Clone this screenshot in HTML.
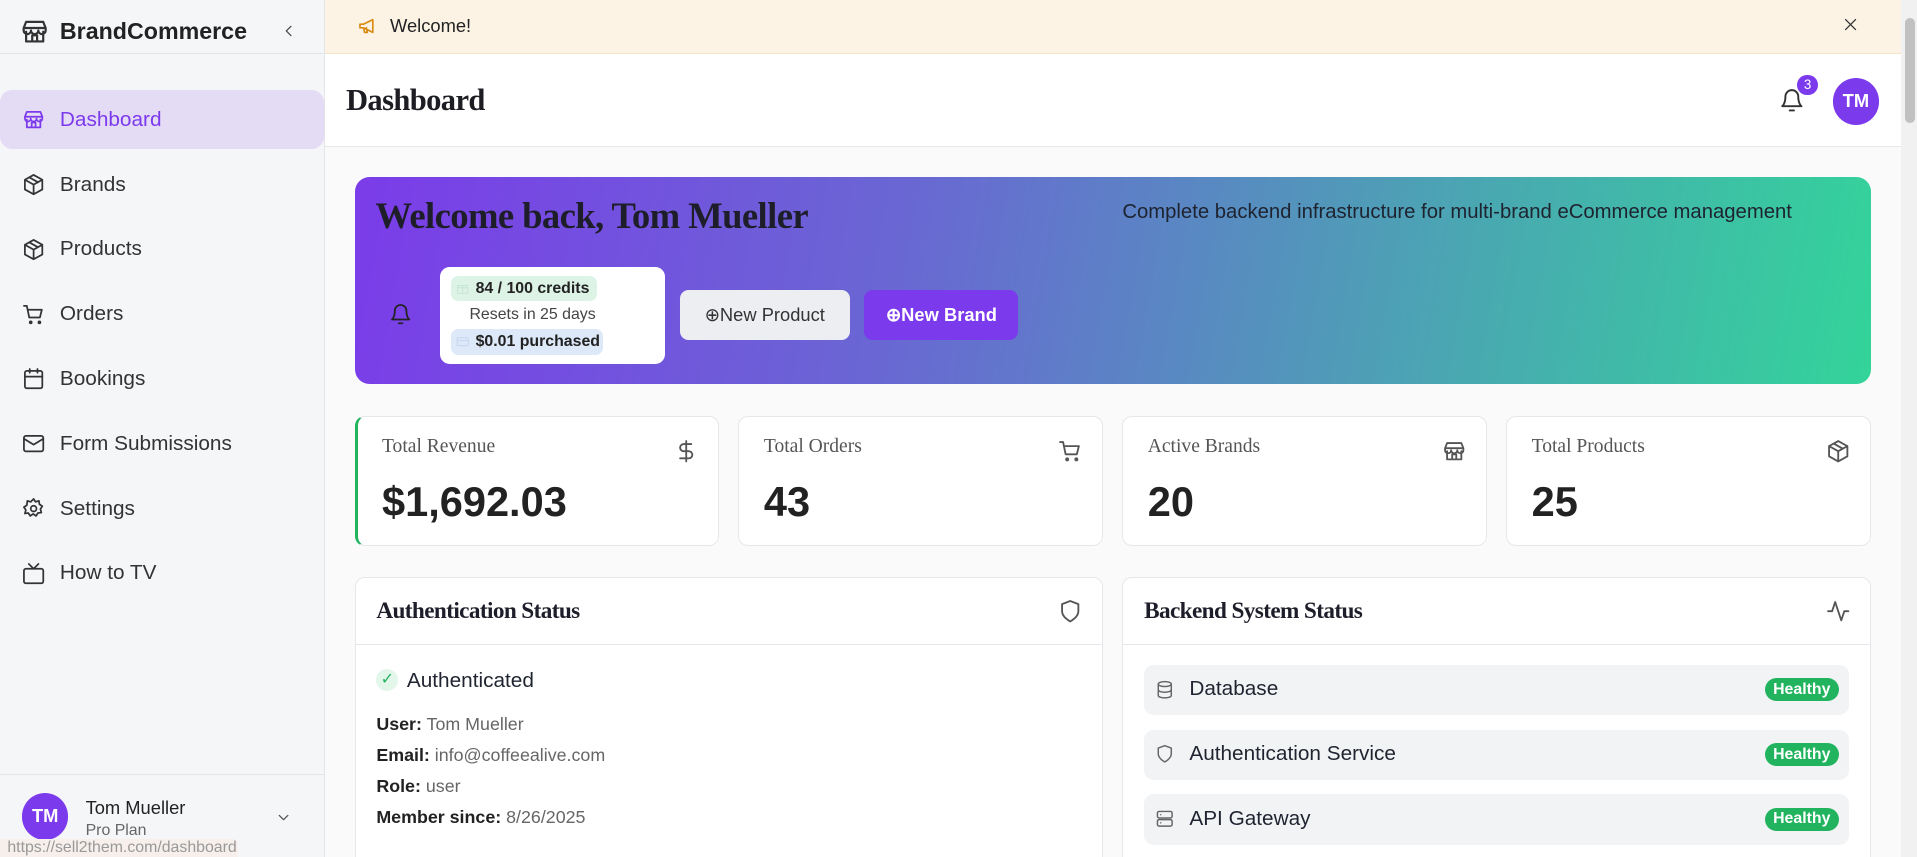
<!DOCTYPE html>
<html><head><meta charset="utf-8"><style>
*{box-sizing:border-box;margin:0;padding:0}
html,body{width:1917px;height:857px;overflow:hidden;background:#fafafa}
#w{zoom:1.22258;width:1568px;height:701px;position:relative;font-family:"Liberation Sans",sans-serif;color:#1f2430}
.a{position:absolute}
.serif{font-family:"Liberation Serif",serif;font-weight:bold;letter-spacing:-0.5px}
svg{fill:none;stroke:currentColor;stroke-width:1.8;stroke-linecap:round;stroke-linejoin:round}
.nav{position:absolute;left:0;width:265px;height:48px;display:flex;align-items:center;font-size:17px;color:#333}
.nav svg{position:absolute;left:18px;width:19px;height:19px}
.nav span{position:absolute;left:49px}
.card{position:absolute;background:#fff;border:1px solid #e5e7eb;border-radius:8px}
.stl{position:absolute;left:20px;top:16px;font-family:"Liberation Serif",serif;font-size:16px;color:#555}
.stv{position:absolute;left:20px;top:50px;font-size:34px;font-weight:bold;color:#222}
.sti{position:absolute;right:16px;top:18px;width:20px;height:20px;color:#555}
.row{position:absolute;left:17px;right:17px;height:41px;background:#f2f3f5;border-radius:8px;font-size:17px}
.row svg{position:absolute;left:9px;top:12px;width:16px;height:16px;color:#666}
.row span{position:absolute;left:37px;top:10px}
.h{position:absolute;right:8px;top:11px;background:#22b35e;color:#fff;font-size:13px;font-weight:bold;padding:2px 7px;border-radius:10px}
</style></head><body><div id="w">
<div class="a" style="left:0;top:0;width:266px;height:701px;background:#f5f6f8;border-right:1px solid #e3e5e8"></div>
<svg class="a" style="left:16px;top:14px;width:24px;height:24px;color:#333" viewBox="0 0 24 24"><path d="M3 9l2-5h14l2 5M3 9h18v2a3 3 0 0 1-6 0 3 3 0 0 1-6 0 3 3 0 0 1-6 0zM5 12v8h14v-8M10 20v-5h4v5"/></svg>
<div class="a" style="left:49px;top:15px;font-size:19px;font-weight:bold;color:#222">BrandCommerce</div>
<svg class="a" style="left:230px;top:19px;width:13px;height:13px;color:#444" viewBox="0 0 24 24"><path d="M15 5l-7 7 7 7"/></svg>
<div class="a" style="left:0;top:43px;width:265px;border-top:1px solid #e3e5e8"></div>
<div class="a" style="left:0;top:74px;width:265px;height:48px;background:#e4dbf5;border-radius:10px"></div>
<div class="nav" style="top:74px;color:#7c3aed"><svg viewBox="0 0 24 24"><path d="M3 9l2-5h14l2 5M3 9h18v2a3 3 0 0 1-6 0 3 3 0 0 1-6 0 3 3 0 0 1-6 0zM5 12v8h14v-8M10 20v-5h4v5"/></svg><span>Dashboard</span></div>
<div class="nav" style="top:127px"><svg viewBox="0 0 24 24"><path d="M12 2l9 5v10l-9 5-9-5V7zM3 7l9 5 9-5M12 12v10M7.5 4.5l9 5"/></svg><span>Brands</span></div>
<div class="nav" style="top:180px"><svg viewBox="0 0 24 24"><path d="M12 2l9 5v10l-9 5-9-5V7zM3 7l9 5 9-5M12 12v10M7.5 4.5l9 5"/></svg><span>Products</span></div>
<div class="nav" style="top:233px"><svg viewBox="0 0 24 24"><path d="M2 3h3l2.5 12h11l2-8H6"/><circle cx="9" cy="20" r="1"/><circle cx="18" cy="20" r="1"/></svg><span>Orders</span></div>
<div class="nav" style="top:286px"><svg viewBox="0 0 24 24"><rect x="3" y="4" width="18" height="18" rx="2"/><path d="M16 2v4M8 2v4M3 10h18"/></svg><span>Bookings</span></div>
<div class="nav" style="top:339px"><svg viewBox="0 0 24 24"><rect x="2" y="4" width="20" height="16" rx="2"/><path d="M22 7l-10 6L2 7"/></svg><span>Form Submissions</span></div>
<div class="nav" style="top:392px"><svg viewBox="0 0 24 24"><circle cx="12" cy="12" r="3"/><path d="M12 2l2 3 3.5-1 .5 3.5 3 2-2 3 1 3.5-3.5.5-2 3-3-2-3 2-2-3L3 17l1-3.5-2-3 3-2L5.5 4 9 5z"/></svg><span>Settings</span></div>
<div class="nav" style="top:445px"><svg viewBox="0 0 24 24"><rect x="2" y="7" width="20" height="15" rx="2"/><path d="M17 2l-5 5-5-5"/></svg><span>How to TV</span></div>
<div class="a" style="left:0;top:633px;width:265px;border-top:1px solid #e3e5e8"></div>
<div class="a" style="left:18px;top:649px;width:38px;height:38px;border-radius:50%;background:#7c3aed;color:#fff;font-weight:bold;font-size:15px;text-align:center;line-height:38px">TM</div>
<div class="a" style="left:70px;top:652px;font-size:15px;color:#222">Tom Mueller</div>
<div class="a" style="left:70px;top:672px;font-size:13px;color:#666">Pro Plan</div>
<svg class="a" style="left:225px;top:662px;width:14px;height:14px;color:#555" viewBox="0 0 24 24"><path d="M6 9l6 6 6-6"/></svg>
<div class="a" style="left:0;top:686px;width:195px;height:15px;background:#f6efec;border-radius:0 4px 0 0;font-size:13px;color:#999;padding-left:6px;line-height:15px">https://sell2them.com/dashboard</div>
<div class="a" style="left:266px;top:0;width:1289px;height:44px;background:#fdf3e5;border-bottom:1px solid #f3e3c9"></div>
<svg class="a" style="left:291px;top:12px;width:20px;height:18px;color:#d98a12" viewBox="0 0 24 24"><path d="M3 10v4h4l10 5V5L7 10zM7 14l1 5h3l-1-5"/></svg>
<div class="a" style="left:319px;top:12px;font-size:15px;color:#222">Welcome!</div>
<svg class="a" style="left:1507px;top:13px;width:14px;height:14px;color:#333" viewBox="0 0 24 24"><path d="M5 5l14 14M19 5L5 19"/></svg>
<div class="a" style="left:266px;top:44px;width:1289px;height:76px;background:#fff;border-bottom:1px solid #e5e7eb"></div>
<div class="a serif" style="left:283px;top:68px;font-size:25px;color:#1d1d24">Dashboard</div>
<svg class="a" style="left:1455px;top:72px;width:21px;height:21px;color:#333" viewBox="0 0 24 24"><path d="M6 8a6 6 0 0 1 12 0c0 7 3 9 3 9H3s3-2 3-9M10 21h4"/></svg>
<div class="a" style="left:1470px;top:61px;width:17px;height:17px;border-radius:50%;background:#7c3aed;color:#fff;font-size:11px;text-align:center;line-height:17px">3</div>
<div class="a" style="left:1499px;top:64px;width:38px;height:38px;border-radius:50%;background:#7c3aed;color:#fff;font-weight:bold;font-size:15px;text-align:center;line-height:38px">TM</div>
<div class="a" style="left:1555px;top:0;width:13px;height:701px;background:#f1f1f1"></div>
<div class="a" style="left:1558px;top:15px;width:8px;height:86px;background:#c1c1c1;border-radius:4px"></div>
<div class="a" style="left:290px;top:145px;width:1240px;height:169px;border-radius:12px;background:linear-gradient(100deg,#7b3ce9 0%,#6a66d4 35%,#4ca3b4 70%,#33d49a 100%)"></div>
<div class="a serif" style="left:307px;top:159px;font-size:30px;color:#1e1e2a">Welcome back, Tom Mueller</div>
<div class="a" style="left:918px;top:164px;font-size:16.6px;color:#1e2330">Complete backend infrastructure for multi-brand eCommerce management</div>
<svg class="a" style="left:318px;top:248px;width:19px;height:19px;color:#222" viewBox="0 0 24 24"><path d="M6 8a6 6 0 0 1 12 0c0 7 3 9 3 9H3s3-2 3-9M10 21h4"/></svg>
<div class="a" style="left:360px;top:218px;width:184px;height:80px;background:#fff;border-radius:8px"></div>
<div class="a" style="left:369px;top:226px;width:119px;height:20px;background:#ddf3e6;border-radius:6px;font-size:13px;font-weight:bold;padding:3px 0 0 20px;color:#222">84 / 100 credits</div>
<svg class="a" style="left:373px;top:230px;width:11px;height:11px;color:#c5e6d2" viewBox="0 0 24 24"><rect x="3" y="8" width="18" height="14"/><path d="M12 8v14M3 12h18"/></svg>
<div class="a" style="left:384px;top:250px;font-size:13px;color:#444">Resets in 25 days</div>
<div class="a" style="left:369px;top:269px;width:124px;height:21px;background:#dde9f8;border-radius:6px;font-size:13px;font-weight:bold;padding:3px 0 0 20px;color:#222">$0.01 purchased</div>
<svg class="a" style="left:373px;top:274px;width:11px;height:11px;color:#c4d6ee" viewBox="0 0 24 24"><rect x="2" y="5" width="20" height="14" rx="2"/><path d="M2 10h20"/></svg>
<div class="a" style="left:556px;top:237px;width:139px;height:41px;background:#eceef2;border-radius:7px;font-size:15px;color:#333;line-height:41px;text-align:center">⊕New Product</div>
<div class="a" style="left:707px;top:237px;width:126px;height:41px;background:#7c3aed;border-radius:7px;font-size:15px;color:#fff;font-weight:bold;line-height:41px;text-align:center">⊕New Brand</div>
<div class="card" style="left:290px;top:340px;width:298px;height:107px;border-left:3px solid #22b35e"><div class="stl">Total Revenue</div><div class="stv">$1,692.03</div><svg class="sti" viewBox="0 0 24 24"><path d="M12 2v20M17 5H9.5a3.5 3.5 0 0 0 0 7h5a3.5 3.5 0 0 1 0 7H6"/></svg></div>
<div class="card" style="left:604px;top:340px;width:298px;height:107px"><div class="stl">Total Orders</div><div class="stv">43</div><svg class="sti" viewBox="0 0 24 24"><path d="M2 3h3l2.5 12h11l2-8H6"/><circle cx="9" cy="20" r="1"/><circle cx="18" cy="20" r="1"/></svg></div>
<div class="card" style="left:918px;top:340px;width:298px;height:107px"><div class="stl">Active Brands</div><div class="stv">20</div><svg class="sti" viewBox="0 0 24 24"><path d="M3 9l2-5h14l2 5M3 9h18v2a3 3 0 0 1-6 0 3 3 0 0 1-6 0 3 3 0 0 1-6 0zM5 12v8h14v-8M10 20v-5h4v5"/></svg></div>
<div class="card" style="left:1232px;top:340px;width:298px;height:107px"><div class="stl">Total Products</div><div class="stv">25</div><svg class="sti" viewBox="0 0 24 24"><path d="M12 2l9 5v10l-9 5-9-5V7zM3 7l9 5 9-5M12 12v10M7.5 4.5l9 5"/></svg></div>
<div class="card" style="left:290px;top:472px;width:612px;height:240px">
<div class="serif" style="position:absolute;left:17px;top:16px;font-size:19px;color:#1e1e2a">Authentication Status</div>
<svg style="position:absolute;right:16px;top:17px;width:20px;height:20px;color:#555" viewBox="0 0 24 24"><path d="M12 22s8-4 8-10V5l-8-3-8 3v7c0 6 8 10 8 10z"/></svg>
<div style="position:absolute;left:0;right:0;top:54px;border-top:1px solid #e5e7eb"></div>
<div style="position:absolute;left:17px;top:74px;width:18px;height:18px;border-radius:50%;background:#e2f6ea;color:#22b35e;font-size:13px;text-align:center;line-height:18px">✓</div>
<div style="position:absolute;left:42px;top:74px;font-size:17px">Authenticated</div>
<div style="position:absolute;left:17px;top:107px;font-size:14.6px;line-height:25.5px;color:#666"><b style="color:#222">User:</b> Tom Mueller<br><b style="color:#222">Email:</b> info@coffeealive.com<br><b style="color:#222">Role:</b> user<br><b style="color:#222">Member since:</b> 8/26/2025</div>
</div>
<div class="card" style="left:918px;top:472px;width:612px;height:240px">
<div class="serif" style="position:absolute;left:17px;top:16px;font-size:19px;color:#1e1e2a">Backend System Status</div>
<svg style="position:absolute;right:16px;top:17px;width:20px;height:20px;color:#555" viewBox="0 0 24 24"><path d="M22 12h-4l-3 9L9 3l-3 9H2"/></svg>
<div style="position:absolute;left:0;right:0;top:54px;border-top:1px solid #e5e7eb"></div>
<div class="row" style="top:71px"><svg viewBox="0 0 24 24"><ellipse cx="12" cy="5" rx="8" ry="3"/><path d="M4 5v14c0 1.7 3.6 3 8 3s8-1.3 8-3V5M4 12c0 1.7 3.6 3 8 3s8-1.3 8-3"/></svg><span>Database</span><div class="h">Healthy</div></div>
<div class="row" style="top:124px"><svg viewBox="0 0 24 24"><path d="M12 22s8-4 8-10V5l-8-3-8 3v7c0 6 8 10 8 10z"/></svg><span>Authentication Service</span><div class="h">Healthy</div></div>
<div class="row" style="top:177px"><svg viewBox="0 0 24 24"><rect x="3" y="3" width="18" height="8" rx="2"/><rect x="3" y="13" width="18" height="8" rx="2"/><path d="M7 7h.01M7 17h.01"/></svg><span>API Gateway</span><div class="h">Healthy</div></div>
</div>
</div></body></html>
